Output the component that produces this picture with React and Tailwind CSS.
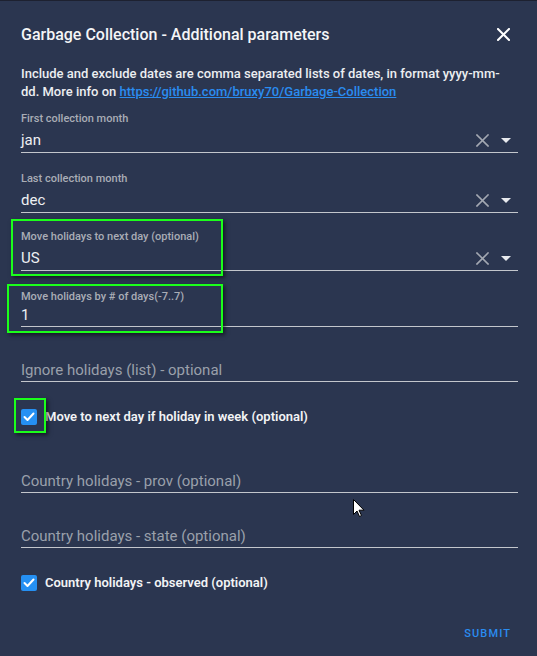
import React from 'react';

const FONT = { fontFamily: 'Roboto, "Liberation Sans", sans-serif' };

function ClearIcon() {
  return (
    <svg width="13" height="13" viewBox="0 0 13 13" fill="none" stroke="#a3a8b2" strokeWidth="1.6" strokeLinecap="square">
      <line x1="1" y1="1" x2="12" y2="12" />
      <line x1="12" y1="1" x2="1" y2="12" />
    </svg>
  );
}

function Caret() {
  return (
    <svg width="10" height="5" viewBox="0 0 10 5" fill="#e8eaee">
      <polygon points="0,0 10,0 5,5" />
    </svg>
  );
}

function SelectField({ label, value }) {
  return (
    <div className="flex flex-col">
      <div className="h-[14px] text-[11px] leading-[14px] font-medium text-[#a9adb6]">{label}</div>
      <div className="mt-[3px] h-[24px] flex items-center border-b border-[#c3c6cc]">
        <span className="flex-1 text-[15px] text-[#eef0f3]">{value}</span>
        <span className="flex items-center mr-[12px]"><ClearIcon /></span>
        <span className="flex items-center mr-[7px]"><Caret /></span>
      </div>
    </div>
  );
}

function EmptyField({ placeholder, short }) {
  return (
    <div className={`${short ? 'h-[55px]' : 'h-[56px]'} flex flex-col justify-end`}>
      <div className="h-[23px] flex items-center border-b border-[#c3c6cc] text-[15px] text-[#9aa0ab]">
        {placeholder}
      </div>
    </div>
  );
}

function Check({ label }) {
  return (
    <div className="flex items-center gap-[8px] h-[40px]">
      <span className="w-[16px] h-[16px] rounded-[2px] bg-[#2590f3] flex items-center justify-center">
        <svg width="12" height="10" viewBox="0 0 12 10" fill="none" stroke="white" strokeWidth="2" strokeLinecap="round" strokeLinejoin="round">
          <polyline points="1.5 5 4.5 8 10.5 1.5" />
        </svg>
      </span>
      <span className="text-[13px] font-semibold text-[#f2f3f5]">{label}</span>
    </div>
  );
}

export default function App() {
  return (
    <div className="relative w-[537px] h-[656px] bg-[#2b3650] overflow-hidden" style={FONT}>
      <div className="h-px bg-[#1d2130]" />

      {/* Header */}
      <div className="flex items-center justify-between pl-[21px] pr-[27px] pt-[23px] h-[44px]">
        <h2 className="text-[16px] leading-[20px] font-medium text-[#f4f5f7]">Garbage Collection - Additional parameters</h2>
        <svg width="13" height="13" viewBox="0 0 13 13" fill="none" stroke="white" strokeWidth="2" strokeLinecap="square">
          <line x1="1" y1="1" x2="12" y2="12" />
          <line x1="12" y1="1" x2="1" y2="12" />
        </svg>
      </div>

      {/* Body */}
      <div className="pl-[21px] pr-[19px]">
        <p className="mt-[20px] pr-[12px] text-[13px] leading-[18px] font-medium text-[#eceef1]">
          Include and exclude dates are comma separated lists of dates, in format yyyy-mm-dd. More info on{' '}
          <a className="text-[#2a8cf0] underline" href="#">https://github.com/bruxy70/Garbage-Collection</a>
        </p>

        <div className="mt-[11px]">
          <SelectField label="First collection month" value="jan" />
        </div>
        <div className="mt-[19px]">
          <SelectField label="Last collection month" value="dec" />
        </div>
        <div className="mt-[17px]">
          <SelectField label="Move holidays to next day (optional)" value="US" />
        </div>
        <div className="mt-[19px] flex flex-col">
          <div className="h-[14px] text-[11px] leading-[14px] font-medium text-[#a9adb6]">Move holidays by # of days(-7..7)</div>
          <div className="mt-px h-[22px] flex items-center border-b border-[#c3c6cc] text-[15px] text-[#eef0f3]">1</div>
        </div>

        <EmptyField placeholder="Ignore holidays (list) - optional" short />
        <div className="mt-[15px]">
          <Check label="Move to next day if holiday in week (optional)" />
        </div>
        <EmptyField placeholder="Country holidays - prov (optional)" />
        <EmptyField placeholder="Country holidays - state (optional)" short />
        <div className="mt-[15px]">
          <Check label="Country holidays - observed (optional)" />
        </div>

        <div className="flex justify-end pr-[7px] mt-[23px]">
          <span className="text-[11px] font-medium tracking-[0.1em] text-[#2a8cf0]">SUBMIT</span>
        </div>
      </div>

      {/* Highlight annotations */}
      <div className="absolute left-[11px] top-[219px] w-[212px] h-[57px] border-2 border-[#1bff1b] shadow-[2px_2px_4px_rgba(0,0,0,0.55)]" />
      <div className="absolute left-[7px] top-[284px] w-[216px] h-[49px] border-2 border-[#1bff1b] shadow-[2px_2px_4px_rgba(0,0,0,0.55)]" />
      <div className="absolute left-[14px] top-[398px] w-[32px] h-[35px] border-2 border-[#1bff1b] shadow-[2px_2px_4px_rgba(0,0,0,0.55)]" />

      {/* Mouse pointer */}
      <svg className="absolute left-[353px] top-[499px]" width="12" height="19" viewBox="0 0 12 19">
        <path d="M0.5 0.5 L0.5 15.5 L4 12 L6.5 17.5 L8.5 16.5 L6 11.2 L11 11.2 Z" fill="white" stroke="black" strokeWidth="1" />
      </svg>
    </div>
  );
}
